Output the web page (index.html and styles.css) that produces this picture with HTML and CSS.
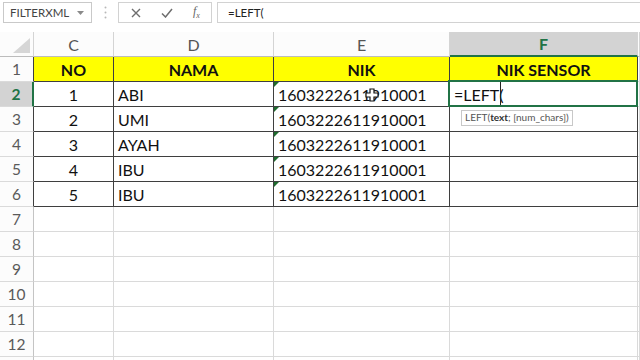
FILE: index.html
```html
<!DOCTYPE html>
<html>
<head>
<meta charset="utf-8">
<link rel="stylesheet" href="styles.css">
</head>
<body>
<div class="fbar">
  <div class="namebox"><span class="nb-text">FILTERXML</span><svg class="dd" width="7" height="4" viewBox="0 0 7 4"><path d="M0 0H7L3.5 4Z" fill="#8a8a8a"/></svg></div>
  <div class="dots"><svg width="3" height="13" viewBox="0 0 3 13"><circle cx="1.5" cy="1.5" r="1" fill="#b8b8b8"/><circle cx="1.5" cy="6.5" r="1" fill="#b8b8b8"/><circle cx="1.5" cy="11.5" r="1" fill="#b8b8b8"/></svg></div>
  <div class="btns">
    <svg class="ic" width="10" height="10" viewBox="0 0 10 10"><path d="M1 1L9 9M9 1L1 9" stroke="#6e6e6e" stroke-width="1.4" fill="none"/></svg>
    <svg class="ic" width="12" height="10" viewBox="0 0 12 10"><path d="M1 5.5L4.5 9L11 1" stroke="#6e6e6e" stroke-width="1.5" fill="none"/></svg>
    <span class="fx">f<sub>x</sub></span>
  </div>
  <div class="finput">=LEFT(</div>
</div>
<table class="sheet">
  <colgroup><col class="w-rh"><col class="w-c"><col class="w-d"><col class="w-e"><col class="w-f"><col class="w-g"></colgroup>
  <tr class="hrow">
    <td class="corner"><svg width="34" height="24" viewBox="0 0 34 24"><path d="M13 21H30V6Z" fill="#d6d6d6"/></svg></td>
    <td class="ch">C</td><td class="ch">D</td><td class="ch">E</td><td class="ch ch-sel">F</td><td class="ch"></td>
  </tr>
  <tr>
    <td class="rh rh-t">1</td>
    <td class="d y b ctr">NO</td><td class="d y b ctr">NAMA</td><td class="d y b ctr">NIK</td><td class="d y b ctr">NIK SENSOR</td><td class="g"></td>
  </tr>
  <tr>
    <td class="rh rh-sel">2</td>
    <td class="d ctr">1</td><td class="d">ABI</td><td class="d tri">1603222611910001</td>
    <td class="d act">=LEFT(<span class="caret"></span><div class="tip">LEFT(<b>text</b>; [num_chars])</div></td><td class="g"></td>
  </tr>
  <tr>
    <td class="rh rh-t">3</td>
    <td class="d ctr">2</td><td class="d">UMI</td><td class="d tri">1603222611910001</td><td class="d"></td><td class="g"></td>
  </tr>
  <tr>
    <td class="rh rh-t">4</td>
    <td class="d ctr">3</td><td class="d">AYAH</td><td class="d tri">1603222611910001</td><td class="d"></td><td class="g"></td>
  </tr>
  <tr>
    <td class="rh rh-t">5</td>
    <td class="d ctr">4</td><td class="d">IBU</td><td class="d tri">1603222611910001</td><td class="d"></td><td class="g"></td>
  </tr>
  <tr>
    <td class="rh rh-t">6</td>
    <td class="d ctr">5</td><td class="d">IBU</td><td class="d tri">1603222611910001</td><td class="d"></td><td class="g"></td>
  </tr>
  <tr><td class="rh">7</td><td class="g"></td><td class="g"></td><td class="g"></td><td class="g"></td><td class="g"></td></tr>
  <tr><td class="rh">8</td><td class="g"></td><td class="g"></td><td class="g"></td><td class="g"></td><td class="g"></td></tr>
  <tr><td class="rh">9</td><td class="g"></td><td class="g"></td><td class="g"></td><td class="g"></td><td class="g"></td></tr>
  <tr><td class="rh">10</td><td class="g"></td><td class="g"></td><td class="g"></td><td class="g"></td><td class="g"></td></tr>
  <tr><td class="rh">11</td><td class="g"></td><td class="g"></td><td class="g"></td><td class="g"></td><td class="g"></td></tr>
  <tr><td class="rh">12</td><td class="g"></td><td class="g"></td><td class="g"></td><td class="g"></td><td class="g"></td></tr>
  <tr><td class="rh"></td><td class="g"></td><td class="g"></td><td class="g"></td><td class="g"></td><td class="g"></td></tr>
</table>
<svg class="mouse" width="14" height="14" viewBox="0 0 14 14"><path d="M5 1H9V5H13V9H9V13H5V9H1V5H5Z" fill="#fff" stroke="#111" stroke-width="1.2"/></svg>
</body>
</html>
```
FILE: styles.css
```css
html, body {
  margin: 0;
  padding: 0;
  width: 640px;
  height: 360px;
  overflow: hidden;
  background: #fff;
  font-family: Lato, "Open Sans", sans-serif;
  position: relative;
}
.fbar {
  display: flex;
  height: 21px;
  padding-top: 2px;
  margin-bottom: 9px;
}
.namebox {
  box-sizing: border-box;
  margin-left: 3px;
  width: 89px;
  height: 21px;
  border: 1px solid #c9c9c9;
  display: flex;
  align-items: center;
  padding-left: 6px;
  font-size: 11.5px;
  color: #444;
}
.nb-text { flex: 1; }
.dd { margin-right: 7px; }
.dots {
  width: 26px;
  display: flex;
  align-items: center;
  justify-content: center;
}
.btns {
  box-sizing: border-box;
  width: 94px;
  height: 21px;
  border: 1px solid #d2d2d2;
  display: flex;
  align-items: center;
  padding-left: 12px;
  gap: 20px;
}
.fx {
  font-family: "Liberation Serif", serif;
  font-style: italic;
  font-size: 12px;
  color: #666;
}
.fx sub { font-size: 8px; }
.finput {
  flex: 1;
  margin-left: 5px;
  box-sizing: border-box;
  height: 21px;
  border: 1px solid #d2d2d2;
  border-right: none;
  display: flex;
  align-items: center;
  padding-left: 10px;
  font-size: 11.5px;
  color: #222;
}
.sheet {
  border-collapse: separate;
  border-spacing: 0;
  table-layout: fixed;
  width: 640px;
}
.w-rh { width: 34px; }
.w-c { width: 80px; }
.w-d { width: 160px; }
.w-e { width: 176px; }
.w-f { width: 188px; }
.w-g { width: 2px; }
.sheet td {
  box-sizing: border-box;
  height: 25px;
  padding: 0 4px;
  white-space: nowrap;
  overflow: visible;
  font-size: 16px;
  color: #111;
  border-right: 1px solid #dadada;
  border-bottom: 1px solid #dadada;
  vertical-align: middle;
}
.hrow td {
  height: 24px;
  background: #fcfcfc;
  color: #555;
  font-size: 16px;
  text-align: center;
  border-right: 1px solid #d4d4d4;
  border-bottom: 1px solid #bcbcbc;
}
.sheet td.corner { padding: 0; line-height: 0; vertical-align: top; }
.sheet td.ch-sel {
  background: #d3d3d3;
  color: #217346;
  font-weight: bold;
  border-bottom: 2px solid #217346;
}
.sheet td.rh {
  background: #fcfcfc;
  color: #5a5a5a;
  text-align: center;
  font-size: 15.5px;
  padding: 0;
  border-right: 1px solid #c4c4c4;
  border-bottom: 1px solid #dadada;
}
.sheet td.rh-t { border-right-color: #3f3f3f; }
.sheet td.rh-sel {
  background: #d3d3d3;
  color: #217346;
  font-weight: bold;
  border-right: 2px solid #217346;
}
.sheet td.d {
  border-right: 1px solid #3f3f3f;
  border-bottom: 1px solid #3f3f3f;
  position: relative;
}
.sheet td.y { background: #ffff00; }
.b { font-weight: bold; }
.ctr { text-align: center; }
.sheet td.tri::before {
  content: "";
  position: absolute;
  left: 0;
  top: 0;
  border-top: 5px solid #1e6b2e;
  border-right: 5px solid transparent;
}
.sheet td.act::after {
  content: "";
  position: absolute;
  left: -2px;
  top: -2px;
  right: -1px;
  bottom: -1px;
  border: 2px solid #217346;
  pointer-events: none;
}
.caret {
  position: absolute;
  top: 0;
  bottom: 0;
  left: 50px;
  border-left: 1px solid #222;
}
.tip {
  position: absolute;
  left: 11px;
  top: 28px;
  z-index: 2;
  background: #fff;
  border: 1px solid #c8c8c8;
  padding: 1px 3px 2px;
  font-size: 10px;
  line-height: 11px;
  color: #555;
}
.tip b { color: #333; }
.mouse {
  position: absolute;
  left: 365px;
  top: 88px;
}
```
